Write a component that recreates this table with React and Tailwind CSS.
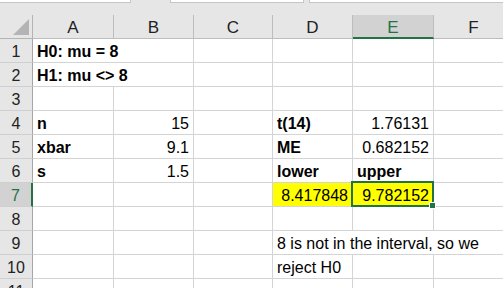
import React from "react";
import clsx from "clsx";

const COLS = ["A", "B", "C", "D", "E", "F"];

// Spreadsheet content, keyed by row number
const ROWS = [
  { n: 1, cells: { A: { t: "H0: mu = 8", bold: true, span: 2 } } },
  { n: 2, cells: { A: { t: "H1: mu <> 8", bold: true, span: 2 } } },
  { n: 3, cells: {} },
  {
    n: 4,
    cells: {
      A: { t: "n", bold: true },
      B: { t: "15", right: true },
      D: { t: "t(14)", bold: true },
      E: { t: "1.76131", right: true },
    },
  },
  {
    n: 5,
    cells: {
      A: { t: "xbar", bold: true },
      B: { t: "9.1", right: true },
      D: { t: "ME", bold: true },
      E: { t: "0.682152", right: true },
    },
  },
  {
    n: 6,
    cells: {
      A: { t: "s", bold: true },
      B: { t: "1.5", right: true },
      D: { t: "lower", bold: true },
      E: { t: "upper", bold: true },
    },
  },
  {
    n: 7,
    selected: true,
    cells: {
      D: { t: "8.417848", right: true, yellow: true },
      E: { t: "9.782152", right: true, yellow: true, active: true },
    },
  },
  { n: 8, cells: {} },
  { n: 9, cells: { D: { t: "8 is not in the interval, so we", span: 3 } } },
  { n: 10, cells: { D: { t: "reject H0" } } },
  { n: 11, cells: {} },
];

const GRID_COLS =
  "grid grid-cols-[33px_81px_80px_79px_80px_81px_80px]";

function Cell({ cell }) {
  const c = cell || {};
  return (
    <div
      className={clsx(
        "relative h-[24px] border-r border-b border-[#d4d4d4] flex items-end pb-[2px] px-[4px] whitespace-nowrap text-[16px] leading-[16px] text-black",
        c.span === 2 && "col-span-2",
        c.span === 3 && "col-span-3",
        c.right ? "justify-end" : "justify-start",
        c.bold && "font-bold",
        c.yellow ? "bg-[#ffff00]" : "bg-white"
      )}
    >
      <span>{c.t}</span>
      {c.active && (
        <div className="absolute -left-[2px] -top-[2px] w-[83px] h-[26px] border-2 border-[#217346] z-10 pointer-events-none">
          <div className="absolute -right-[4px] -bottom-[4px] w-[7px] h-[7px] bg-[#217346] border border-white" />
        </div>
      )}
    </div>
  );
}

function RowHeader({ n, selected }) {
  return (
    <div
      className={clsx(
        "h-[24px] border-b border-[#cfcfcf] flex items-end justify-center pb-[2px] text-[16px] leading-[16px]",
        selected
          ? "bg-[#d2d2d2] border-r-2 border-r-[#217346] text-[#217346]"
          : "bg-[#e6e6e6] border-r border-r-[#a6a6a6] text-[#222222]"
      )}
    >
      {n}
    </div>
  );
}

export default function App() {
  return (
    <div className="w-[503px] h-[288px] overflow-hidden bg-white font-['Liberation_Sans',sans-serif]">
      {/* formula bar edges */}
      <div className="h-[15px] bg-[#e6e6e6] flex items-start">
        <div className="w-[131px] h-[3px] bg-white border-r border-b border-[#c6c6c6]" />
        <div className="w-[39px]" />
        <div className="w-[134px] h-[3px] bg-white border-l border-r border-b border-[#c6c6c6]" />
        <div className="w-[5px]" />
        <div className="flex-1 h-[3px] bg-white border-l border-b border-[#c6c6c6]" />
      </div>

      {/* column headers */}
      <div className={clsx(GRID_COLS, "bg-[#e6e6e6]")}>
        <div className="relative h-[24px] border-r border-b border-[#b4b4b4]">
          <svg
            className="absolute right-[3px] bottom-[3px]"
            width="16"
            height="16"
            viewBox="0 0 16 16"
          >
            <polygon points="16,0 16,16 0,16" fill="#b4b4b4" />
          </svg>
        </div>
        {COLS.map((col) => (
          <div
            key={col}
            className={clsx(
              "h-[24px] border-r border-r-[#bdbdbd] flex items-end justify-center text-[17px] leading-[17px]",
              col === "E"
                ? "bg-[#d2d2d2] border-b-2 border-b-[#217346] text-[#217346] pb-[1px]"
                : "border-b border-b-[#bdbdbd] text-[#222222] pb-[2px]"
            )}
          >
            {col}
          </div>
        ))}
      </div>

      {/* sheet body */}
      <div className={GRID_COLS}>
        {ROWS.map((row) => {
          const out = [<RowHeader key={`h${row.n}`} n={row.n} selected={row.selected} />];
          let skip = 0;
          COLS.forEach((col) => {
            if (skip > 0) {
              skip -= 1;
              return;
            }
            const cell = row.cells[col];
            if (cell && cell.span) skip = cell.span - 1;
            out.push(<Cell key={`${col}${row.n}`} cell={cell} />);
          });
          return out;
        })}
      </div>
    </div>
  );
}
